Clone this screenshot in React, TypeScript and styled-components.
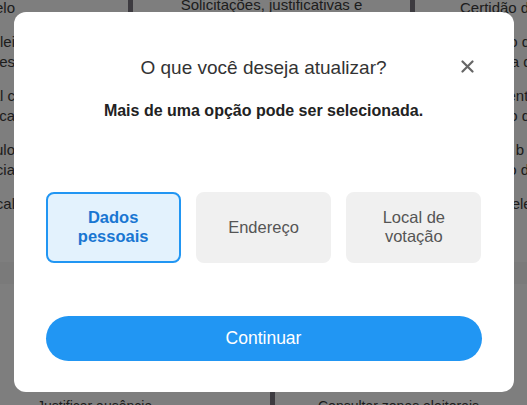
import React, { useState } from "react";
import styled, { createGlobalStyle } from "styled-components";

const GlobalStyle = createGlobalStyle`
  *, *::before, *::after {
    box-sizing: border-box;
  }
  html, body {
    margin: 0;
    padding: 0;
    width: 100%;
    height: 100%;
    overflow: hidden;
  }
  body {
    font-family: "Liberation Sans", Arial, sans-serif;
    background: #f4f4f4;
  }
`;

type Option = { id: string; lines: string[] };

const OPTIONS: Option[] = [
  { id: "dados", lines: ["Dados", "pessoais"] },
  { id: "endereco", lines: ["Endereço"] },
  { id: "local", lines: ["Local de", "votação"] },
];

const LEFT_ITEMS = [
  "Título eleitoral: modelo",
  "Consultar por lei",
  "Atualizar dados pes",
  "Mudar de local c",
  "Quitação eleitoral ca",
  "Segunda via do título",
  "Consultar pendência",
  "Local de votação local",
];

const RIGHT_ITEMS = [
  "Certidão de quitação",
  "Emissão do c",
  "Consulta do n",
  "Documento ent",
  "Emissão do s",
  "Filiação b",
  "Certidão de filiação",
  "Crimes eleitorais",
];

const App = () => {
  const [selected, setSelected] = useState<string[]>(["dados"]);

  const toggle = (id: string) => {
    setSelected((prev) =>
      prev.includes(id) ? prev.filter((x) => x !== id) : [...prev, id]
    );
  };

  return (
    <>
      <GlobalStyle />
      <Page>
        <TopRow>
          <SideCard width={128}>
            {LEFT_ITEMS.map((t) => (
              <SideItem key={t} side="left">
                <span>{t}</span>
              </SideItem>
            ))}
          </SideCard>
          <CenterCard>
            <CardTitle>Solicitações, justificativas e</CardTitle>
          </CenterCard>
          <SideCard width={112}>
            {RIGHT_ITEMS.map((t) => (
              <SideItem key={t} side="right">
                <span>{t}</span>
              </SideItem>
            ))}
          </SideCard>
        </TopRow>
        <BottomRow>
          <BottomCard width={270}>
            <BottomLabel>Justificar ausência</BottomLabel>
          </BottomCard>
          <BottomCard accent>
            <BottomLabel>Consultar zonas eleitorais</BottomLabel>
          </BottomCard>
        </BottomRow>
      </Page>

      <Overlay>
        <Modal>
          <Header>
            <Title>O que você deseja atualizar?</Title>
            <CloseButton aria-label="Fechar">
              <svg width="13" height="13" viewBox="0 0 13 13">
                <path
                  d="M1.5 1.5 L11.5 11.5 M11.5 1.5 L1.5 11.5"
                  stroke="#666"
                  strokeWidth="2.2"
                  strokeLinecap="round"
                />
              </svg>
            </CloseButton>
          </Header>
          <Subtitle>Mais de uma opção pode ser selecionada.</Subtitle>
          <OptionsGrid>
            {OPTIONS.map((o) => {
              const active = selected.includes(o.id);
              return (
                <OptionBox key={o.id} active={active} onClick={() => toggle(o.id)}>
                  {o.lines.map((l) => (
                    <span key={l}>{l}</span>
                  ))}
                </OptionBox>
              );
            })}
          </OptionsGrid>
          <ContinueButton>Continuar</ContinueButton>
        </Modal>
      </Overlay>
    </>
  );
};

export default App;

const Page = styled.div`
  width: 527px;
  height: 405px;
  display: flex;
  flex-direction: column;
  gap: 22px;
  overflow: hidden;
`;

const TopRow = styled.div`
  display: flex;
  height: 266px;
  margin-top: -4px;
`;

const SideCard = styled.div<{ width: number }>`
  width: ${(p) => p.width}px;
  flex-shrink: 0;
  background: #fcfcfc;
  display: flex;
  flex-direction: column;
  padding-top: 2px;
  overflow: hidden;
`;

const SideItem = styled.div<{ side: "left" | "right" }>`
  display: flex;
  justify-content: ${(p) => (p.side === "left" ? "flex-end" : "flex-start")};
  font-size: 15px;
  color: #3a3a3a;
  line-height: 20px;
  white-space: nowrap;
  margin-bottom: 14px;
  padding: ${(p) => (p.side === "left" ? "0 113px 0 0" : "0 0 0 45px")};
  &:nth-child(even) {
    margin-bottom: 0;
  }
  > span {
    flex-shrink: 0;
  }
`;

const CenterCard = styled.div`
  flex: 1;
  background: #fcfcfc;
  border-left: 5px solid #7a7680;
  border-right: 5px solid #7a7680;
  display: flex;
  justify-content: center;
`;

const CardTitle = styled.div`
  font-size: 15px;
  color: #3a3a3a;
  line-height: 18px;
`;

const BottomRow = styled.div`
  display: flex;
  flex: 1;
`;

const BottomCard = styled.div<{ width?: number; accent?: boolean }>`
  ${(p) => (p.width ? `width: ${p.width}px; flex-shrink: 0;` : "flex: 1;")}
  background: #fcfcfc;
  display: flex;
  align-items: flex-end;
  padding-left: ${(p) => (p.accent ? 43 : 37)}px;
  border-left: ${(p) => (p.accent ? "5px solid #7a7680" : "none")};
`;

const BottomLabel = styled.div`
  font-size: 14px;
  color: #3a3a3a;
  white-space: nowrap;
  margin-bottom: -9px;
`;

const Overlay = styled.div`
  position: fixed;
  inset: 0;
  background: rgba(0, 0, 0, 0.5);
  display: flex;
  align-items: center;
  justify-content: center;
`;

const Modal = styled.div`
  width: 500px;
  height: 380px;
  background: #ffffff;
  border-radius: 12px;
  padding: 44px 32px 31px;
  display: flex;
  flex-direction: column;
  margin-top: -2px;
`;

const Header = styled.div`
  position: relative;
  height: 24px;
  display: flex;
  align-items: center;
  justify-content: center;
`;

const Title = styled.h2`
  margin: 0;
  font-size: 19px;
  font-weight: 400;
  color: #333333;
  line-height: 24px;
`;

const CloseButton = styled.button`
  position: absolute;
  right: 6px;
  top: 3px;
  width: 16px;
  height: 16px;
  padding: 0;
  border: none;
  background: none;
  display: flex;
  align-items: center;
  justify-content: center;
  cursor: pointer;
`;

const Subtitle = styled.p`
  margin: 22px 0 0;
  font-size: 16px;
  font-weight: 700;
  color: #222222;
  line-height: 18px;
  text-align: center;
`;

const OptionsGrid = styled.div`
  margin-top: 72px;
  display: grid;
  grid-template-columns: repeat(3, 1fr);
  gap: 15px;
  height: 71px;
`;

const OptionBox = styled.button<{ active: boolean }>`
  border-radius: 8px;
  border: 2px solid ${(p) => (p.active ? "#2196f3" : "#f0f0f0")};
  background: ${(p) => (p.active ? "#e3f2fd" : "#f0f0f0")};
  color: ${(p) => (p.active ? "#1976d2" : "#555555")};
  font-family: "Liberation Sans", Arial, sans-serif;
  font-size: 16.5px;
  font-weight: ${(p) => (p.active ? 700 : 400)};
  line-height: 19px;
  display: flex;
  flex-direction: column;
  align-items: center;
  justify-content: center;
  padding: 0;
  cursor: pointer;
`;

const ContinueButton = styled.button`
  margin-top: 53px;
  height: 45px;
  border: none;
  border-radius: 23px;
  background: #2196f3;
  color: #ffffff;
  font-family: "Liberation Sans", Arial, sans-serif;
  font-size: 17.5px;
  cursor: pointer;
`;
